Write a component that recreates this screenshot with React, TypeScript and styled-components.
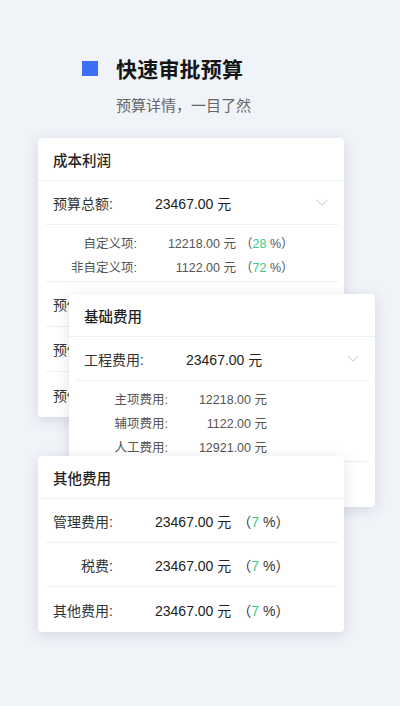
import styled, { createGlobalStyle } from "styled-components";

const GlobalStyle = createGlobalStyle`
  html, body {
    margin: 0;
    padding: 0;
    background: #f0f3f8;
  }
  body {
    font-family: "Liberation Sans", "Noto Sans CJK SC", sans-serif;
    color: #222;
  }
`;

const Page = styled.div`
  width: 400px;
  height: 706px;
  overflow: hidden;
  background: #f0f3f8;
`;

const Hero = styled.div`
  height: 120px;
  box-sizing: border-box;
  padding: 53px 0 0 82px;
`;

const TitleLine = styled.div`
  display: flex;
  align-items: center;
  gap: 18px;
  height: 30px;
`;

const Mark = styled.span`
  width: 16px;
  height: 15px;
  background: #3d6ef6;
`;

const Title = styled.h1`
  margin: 0;
  font-size: 21px;
  font-weight: 600;
  color: #151515;
  letter-spacing: 0.2px;
`;

const Subtitle = styled.p`
  margin: 12px 0 0 34px;
  font-size: 15px;
  line-height: 22px;
  color: #666;
`;

const Stack = styled.div`
  position: relative;
  height: 586px;
`;

const Card = styled.section<{ $top: number; $left: number }>`
  position: absolute;
  top: ${(p) => p.$top}px;
  left: ${(p) => p.$left}px;
  width: 306px;
  background: #fff;
  border-radius: 4px;
  box-shadow: 0 3px 14px rgba(40, 52, 78, 0.14);
  overflow: hidden;
`;

const CardHead = styled.header`
  height: 43px;
  box-sizing: border-box;
  display: flex;
  align-items: center;
  padding: 0 15px;
  border-bottom: 1px solid #eeeff2;
  font-size: 14.5px;
  font-weight: 500;
  color: #1f1f1f;
`;

const Row = styled.div<{ $h?: number }>`
  height: ${(p) => p.$h ?? 44}px;
  box-sizing: border-box;
  display: flex;
  align-items: center;
  margin: 0 6px 0 8px;
  padding: 0 1px 0 7px;
  border-bottom: 1px solid #eeeff2;
  font-size: 14px;
  &:last-child {
    border-bottom: none;
  }
`;

const Label = styled.span<{ $w: number; $right?: boolean }>`
  flex: none;
  width: ${(p) => p.$w}px;
  text-align: ${(p) => (p.$right ? "right" : "left")};
  color: #333;
  white-space: nowrap;
`;

const Value = styled.span<{ $gap?: number }>`
  margin-left: ${(p) => p.$gap ?? 0}px;
  color: #222;
  white-space: nowrap;
`;

const Share = styled.span`
  margin-left: 6px;
  color: #333;
  white-space: nowrap;
`;

const Green = styled.span`
  color: #3cc987;
`;

const Chevron = styled.svg`
  margin-left: auto;
  margin-right: 9px;
  width: 12px;
  height: 7px;
`;

const SubBlock = styled.div`
  margin: 0 6px 0 8px;
  padding: 5px 1px 3px 7px;
  border-bottom: 1px solid #eeeff2;
  &:last-child {
    border-bottom: none;
  }
`;

const SubRow = styled.div`
  height: 24px;
  display: flex;
  align-items: center;
  font-size: 12.5px;
  color: #555;
`;

const SubLabel = styled.span`
  width: 84px;
  text-align: right;
  white-space: nowrap;
`;

const SubValue = styled.span`
  width: 99px;
  text-align: right;
  white-space: nowrap;
`;

const SubShare = styled.span`
  margin-left: 4px;
  white-space: nowrap;
`;

function Down() {
  return (
    <Chevron viewBox="0 0 12 7">
      <polyline points="0.5,0.7 6,6.2 11.5,0.7" fill="none" stroke="#c4c6cc" strokeWidth="1" />
    </Chevron>
  );
}

function Pct({ n }: { n: number }) {
  return (
    <>
      （<Green>{n}</Green> %）
    </>
  );
}

export default function App() {
  return (
    <Page>
      <GlobalStyle />
      <Hero>
        <TitleLine>
          <Mark />
          <Title>快速审批预算</Title>
        </TitleLine>
        <Subtitle>预算详情，一目了然</Subtitle>
      </Hero>

      <Stack>
        <Card $top={18} $left={38}>
          <CardHead>成本利润</CardHead>
          <Row>
            <Label $w={102}>预算总额:</Label>
            <Value>23467.00 元</Value>
            <Down />
          </Row>
          <SubBlock>
            <SubRow>
              <SubLabel>自定义项:</SubLabel>
              <SubValue>12218.00 元</SubValue>
              <SubShare>
                <Pct n={28} />
              </SubShare>
            </SubRow>
            <SubRow>
              <SubLabel>非自定义项:</SubLabel>
              <SubValue>1122.00 元</SubValue>
              <SubShare>
                <Pct n={72} />
              </SubShare>
            </SubRow>
          </SubBlock>
          {/* rows below sit under the next card; only their first glyph shows */}
          <Row $h={45}>
            <Label $w={30}>预估</Label>
          </Row>
          <Row $h={45}>
            <Label $w={30}>预估</Label>
          </Row>
          <Row $h={45}>
            <Label $w={30}>预估</Label>
          </Row>
        </Card>

        <Card $top={174} $left={69}>
          <CardHead>基础费用</CardHead>
          <Row>
            <Label $w={102}>工程费用:</Label>
            <Value>23467.00 元</Value>
            <Down />
          </Row>
          <SubBlock>
            <SubRow>
              <SubLabel>主项费用:</SubLabel>
              <SubValue>12218.00 元</SubValue>
            </SubRow>
            <SubRow>
              <SubLabel>辅项费用:</SubLabel>
              <SubValue>1122.00 元</SubValue>
            </SubRow>
            <SubRow>
              <SubLabel>人工费用:</SubLabel>
              <SubValue>12921.00 元</SubValue>
            </SubRow>
          </SubBlock>
          <Row $h={45} />
        </Card>

        <Card $top={336} $left={38}>
          <CardHead>其他费用</CardHead>
          <Row>
            <Label $w={60} $right>管理费用:</Label>
            <Value $gap={42}>23467.00 元</Value>
            <Share>
              <Pct n={7} />
            </Share>
          </Row>
          <Row>
            <Label $w={60} $right>税费:</Label>
            <Value $gap={42}>23467.00 元</Value>
            <Share>
              <Pct n={7} />
            </Share>
          </Row>
          <Row $h={45}>
            <Label $w={60} $right>其他费用:</Label>
            <Value $gap={42}>23467.00 元</Value>
            <Share>
              <Pct n={7} />
            </Share>
          </Row>
        </Card>
      </Stack>
    </Page>
  );
}
